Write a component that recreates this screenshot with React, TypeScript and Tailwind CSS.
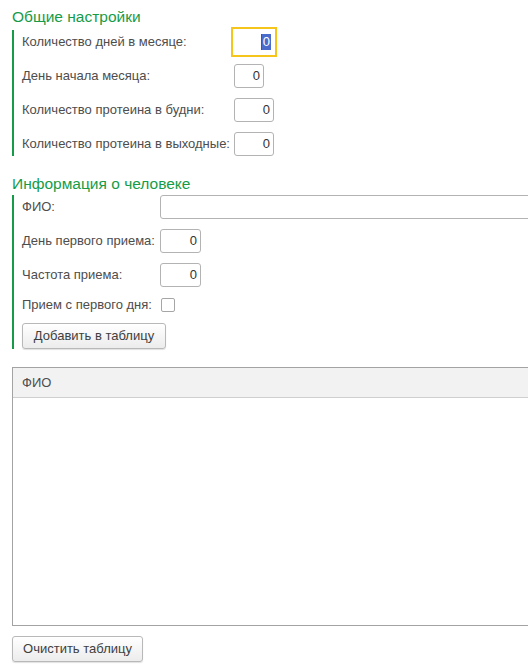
import React from "react";

const Label: React.FC<{ text: string; w: string }> = ({ text, w }) => (
    <div className={`${w} shrink-0 text-[13px] leading-[16px] text-[#4d4d4d]`}>{text}</div>
);

const NumInput: React.FC<{ w?: string; focused?: boolean }> = ({ w = "w-[40px]", focused }) => {
    if (focused) {
        return (
            <div
                className={`${w} flex h-[24px] items-center justify-end bg-white pr-[3px] outline-2 outline-offset-1 outline-[#f5c51b]`}
            >
                <span className="border-l border-[#6b5a1e] bg-[#4b6ccb] px-[1px] text-[13px] leading-[16px] text-white">0</span>
            </div>
        );
    }
    return (
        <div
            className={`${w} flex h-[24px] items-center justify-end rounded-[3px] border border-[#b3b3b3] bg-white pr-[3px] text-[13px] leading-[16px] text-[#333]`}
        >
            0
        </div>
    );
};

const Button: React.FC<{ text: string; w: string }> = ({ text, w }) => (
    <div
        className={`${w} flex h-[26px] items-center justify-center rounded-[3px] border border-[#b8b8b8] bg-gradient-to-b from-white to-[#ececec] text-[13px] leading-[16px] text-[#404040] shadow-[0_1px_1px_rgba(0,0,0,0.12)]`}
    >
        {text}
    </div>
);

const GroupTitle: React.FC<{ text: string }> = ({ text }) => (
    <div className="pl-[12px] text-[15.5px] leading-[18px] text-[#169c48]">{text}</div>
);

export default function App() {
    return (
        <div className="h-[664px] w-[528px] overflow-hidden bg-white font-['Liberation_Sans',Arial,sans-serif]">
            <div className="pt-[8px]">
                <GroupTitle text="Общие настройки" />
            </div>

            {/* Общие настройки */}
            <div className="ml-[12px] mt-[4px] flex flex-col gap-[10px] border-l-2 border-[#169c48] pl-[8px]">
                <div className="flex h-[24px] items-center">
                    <Label text="Количество дней в месяце:" w="w-[212px]" />
                    <NumInput focused />
                </div>
                <div className="flex h-[24px] items-center">
                    <Label text="День начала месяца:" w="w-[212px]" />
                    <NumInput w="w-[30px]" />
                </div>
                <div className="flex h-[24px] items-center">
                    <Label text="Количество протеина в будни:" w="w-[212px]" />
                    <NumInput />
                </div>
                <div className="flex h-[24px] items-center">
                    <Label text="Количество протеина в выходные:" w="w-[212px]" />
                    <NumInput />
                </div>
            </div>

            <div className="mt-[19px]">
                <GroupTitle text="Информация о человеке" />
            </div>

            {/* Информация о человеке */}
            <div className="ml-[12px] mt-[2px] flex flex-col gap-[10px] border-l-2 border-[#169c48] pl-[8px]">
                <div className="flex h-[24px] items-center">
                    <Label text="ФИО:" w="w-[138px]" />
                    <div className="h-[24px] w-[400px] shrink-0 rounded-[3px] border border-[#b3b3b3] bg-white" />
                </div>
                <div className="flex h-[24px] items-center">
                    <Label text="День первого приема:" w="w-[138px]" />
                    <NumInput w="w-[41px]" />
                </div>
                <div className="flex h-[24px] items-center">
                    <Label text="Частота приема:" w="w-[138px]" />
                    <NumInput w="w-[41px]" />
                </div>
                <div className="flex h-[16px] items-center">
                    <Label text="Прием с первого дня:" w="w-[139px]" />
                    <div className="h-[14px] w-[14px] rounded-[2px] border border-[#a6a6a6] bg-white" />
                </div>
                <Button text="Добавить в таблицу" w="w-[144px]" />
            </div>

            {/* Таблица */}
            <div className="ml-[12px] mt-[18px] flex h-[259px] w-[540px] flex-col border border-[#a3a3a3] bg-white">
                <div className="flex h-[30px] items-center border-b border-[#cfcfcf] bg-[#f2f2f2] pl-[9px] text-[13px] leading-[16px] text-[#4d4d4d]">
                    ФИО
                </div>
            </div>

            <div className="ml-[12px] mt-[10px]">
                <Button text="Очистить таблицу" w="w-[131px]" />
            </div>
        </div>
    );
}
